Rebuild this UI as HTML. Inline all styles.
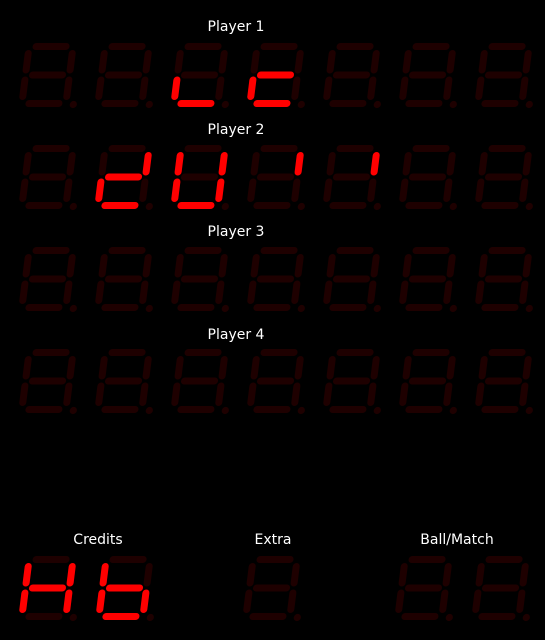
<!DOCTYPE html>
<html><head><meta charset="utf-8"><style>
html,body{margin:0;padding:0;background:#000;width:545px;height:640px;overflow:hidden}
.l{position:absolute;color:#fff;font:14px "DejaVu Sans","Liberation Sans",sans-serif;transform:translateX(-50%);white-space:nowrap}
svg{position:absolute;left:0;top:0}
</style></head><body>
<div class="l" style="left:236px;top:19px">Player 1</div>
<div class="l" style="left:236px;top:122px">Player 2</div>
<div class="l" style="left:236px;top:224px">Player 3</div>
<div class="l" style="left:236px;top:327px">Player 4</div>
<div class="l" style="left:98px;top:532px">Credits</div>
<div class="l" style="left:273px;top:532px">Extra</div>
<div class="l" style="left:457px;top:532px">Ball/Match</div>
<svg width="545" height="640" viewBox="0 0 545 640">
<defs>
<line id="a" x1="10.5" y1="3.5" x2="40.5" y2="3.5" stroke-width="7" stroke-linecap="round"/>
<line id="b" x1="47.5" y1="10.5" x2="47.5" y2="27" stroke-width="7" stroke-linecap="round"/>
<line id="c" x1="47.5" y1="37" x2="47.5" y2="53.5" stroke-width="7" stroke-linecap="round"/>
<line id="d" x1="10.5" y1="60.5" x2="40.5" y2="60.5" stroke-width="7" stroke-linecap="round"/>
<line id="e" x1="3.5" y1="37" x2="3.5" y2="53.5" stroke-width="7" stroke-linecap="round"/>
<line id="f" x1="3.5" y1="10.5" x2="3.5" y2="27" stroke-width="7" stroke-linecap="round"/>
<line id="g" x1="10.5" y1="32" x2="40.5" y2="32" stroke-width="7" stroke-linecap="round"/>
<g id="D" stroke="#1e0000"><use href="#a"/><use href="#b"/><use href="#c"/><use href="#d"/><use href="#e"/><use href="#f"/><use href="#g"/><circle cx="55" cy="61.5" r="3.6" fill="#1e0000" stroke="none"/></g>
</defs>
<g stroke="#f00">
<g transform="translate(18,43) matrix(1,0,-0.125,1,8,0)"><use href="#D"/></g>
<g transform="translate(94,43) matrix(1,0,-0.125,1,8,0)"><use href="#D"/></g>
<g transform="translate(170,43) matrix(1,0,-0.125,1,8,0)"><use href="#D"/><use href="#e"/><use href="#d"/></g>
<g transform="translate(246,43) matrix(1,0,-0.125,1,8,0)"><use href="#D"/><use href="#g"/><use href="#e"/><use href="#d"/></g>
<g transform="translate(322,43) matrix(1,0,-0.125,1,8,0)"><use href="#D"/></g>
<g transform="translate(398,43) matrix(1,0,-0.125,1,8,0)"><use href="#D"/></g>
<g transform="translate(474,43) matrix(1,0,-0.125,1,8,0)"><use href="#D"/></g>
<g transform="translate(18,145) matrix(1,0,-0.125,1,8,0)"><use href="#D"/></g>
<g transform="translate(94,145) matrix(1,0,-0.125,1,8,0)"><use href="#D"/><use href="#b"/><use href="#g"/><use href="#e"/><use href="#d"/></g>
<g transform="translate(170,145) matrix(1,0,-0.125,1,8,0)"><use href="#D"/><use href="#f"/><use href="#b"/><use href="#e"/><use href="#c"/><use href="#d"/></g>
<g transform="translate(246,145) matrix(1,0,-0.125,1,8,0)"><use href="#D"/><use href="#b"/></g>
<g transform="translate(322,145) matrix(1,0,-0.125,1,8,0)"><use href="#D"/><use href="#b"/></g>
<g transform="translate(398,145) matrix(1,0,-0.125,1,8,0)"><use href="#D"/></g>
<g transform="translate(474,145) matrix(1,0,-0.125,1,8,0)"><use href="#D"/></g>
<g transform="translate(18,247) matrix(1,0,-0.125,1,8,0)"><use href="#D"/></g>
<g transform="translate(94,247) matrix(1,0,-0.125,1,8,0)"><use href="#D"/></g>
<g transform="translate(170,247) matrix(1,0,-0.125,1,8,0)"><use href="#D"/></g>
<g transform="translate(246,247) matrix(1,0,-0.125,1,8,0)"><use href="#D"/></g>
<g transform="translate(322,247) matrix(1,0,-0.125,1,8,0)"><use href="#D"/></g>
<g transform="translate(398,247) matrix(1,0,-0.125,1,8,0)"><use href="#D"/></g>
<g transform="translate(474,247) matrix(1,0,-0.125,1,8,0)"><use href="#D"/></g>
<g transform="translate(18,349) matrix(1,0,-0.125,1,8,0)"><use href="#D"/></g>
<g transform="translate(94,349) matrix(1,0,-0.125,1,8,0)"><use href="#D"/></g>
<g transform="translate(170,349) matrix(1,0,-0.125,1,8,0)"><use href="#D"/></g>
<g transform="translate(246,349) matrix(1,0,-0.125,1,8,0)"><use href="#D"/></g>
<g transform="translate(322,349) matrix(1,0,-0.125,1,8,0)"><use href="#D"/></g>
<g transform="translate(398,349) matrix(1,0,-0.125,1,8,0)"><use href="#D"/></g>
<g transform="translate(474,349) matrix(1,0,-0.125,1,8,0)"><use href="#D"/></g>
<g transform="translate(18,556) matrix(1,0,-0.125,1,8,0)"><use href="#D"/><use href="#f"/><use href="#b"/><use href="#g"/><use href="#e"/><use href="#c"/></g>
<g transform="translate(95,556) matrix(1,0,-0.125,1,8,0)"><use href="#D"/><use href="#f"/><use href="#g"/><use href="#e"/><use href="#c"/><use href="#d"/></g>
<g transform="translate(242,556) matrix(1,0,-0.125,1,8,0)"><use href="#D"/></g>
<g transform="translate(394,556) matrix(1,0,-0.125,1,8,0)"><use href="#D"/></g>
<g transform="translate(471,556) matrix(1,0,-0.125,1,8,0)"><use href="#D"/></g>
</g>
</svg>
</body></html>
